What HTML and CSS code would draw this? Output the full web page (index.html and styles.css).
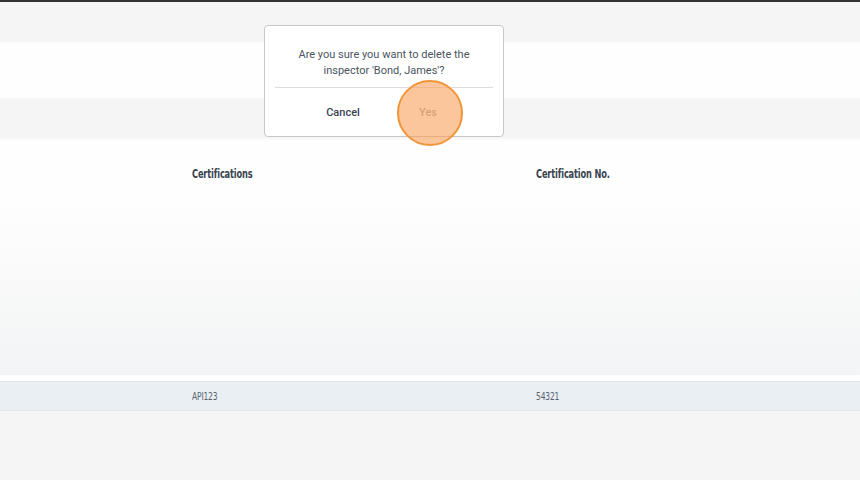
FILE: index.html
```html
<!DOCTYPE html>
<html lang="en">
<head>
<meta charset="UTF-8">
<title>Inspectors</title>
<link rel="stylesheet" href="styles.css">
</head>
<body>

    <div class="topo"></div>
    <div class="faixa-cinza alta"></div>
    <div class="faixa-branca"></div>
    <div class="faixa-cinza"></div>

    <section class="tabela">
        <div class="cabecalho">
            <span class="col col-cert"><span class="estreito">Certifications</span></span>
            <span class="col col-num"><span class="estreito">Certification No.</span></span>
        </div>
        <div class="sombra"></div>
        <div class="linha">
            <span class="col col-cert"><span class="estreito">API123</span></span>
            <span class="col col-num"><span class="estreito">54321</span></span>
        </div>
    </section>

    <div class="dialogo">
        <p class="mensagem">Are you sure you want to delete the<br>inspector 'Bond, James'?</p>
        <div class="botoes">
            <button class="btn-dialogo">Cancel</button>
            <button class="btn-dialogo sim">Yes</button>
        </div>
    </div>

    <div class="clique"></div>

</body>
</html>
```

FILE: styles.css
```css
*{
    margin: 0;
    padding: 0;
    box-sizing: border-box;
}

body{
    background-color: #f5f5f5;
    font-family: "Roboto", "Liberation Sans", sans-serif;
    height: 480px;
    overflow: hidden;
}

.topo{
    height: 2px;
    background: #333333;
}

.faixa-cinza{
    height: 42px;
    background: #f5f5f5;
    border-bottom: 2px solid #fafafa;
}

.faixa-cinza.alta{
    height: 40px;
    border-bottom: none;
}

.faixa-branca{
    height: 56px;
    background: #fefefe;
}

.tabela{
    background: #fefefe;
}

.cabecalho{
    display: flex;
    height: 62px;
    padding-top: 6px;
    align-items: center;
}

.col{
    font-family: "DejaVu Sans Condensed", "Liberation Sans Narrow", sans-serif;
    font-size: 11px;
    color: #3a4350;
}

.estreito{
    display: inline-block;
    transform: scaleX(0.8);
    transform-origin: left center;
}

.col-cert{
    width: 344px;
    margin-left: 192px;
}

.cabecalho .col{
    font-weight: bold;
    font-size: 11.5px;
    letter-spacing: -0.2px;
}

.sombra{
    height: 173px;
    background: linear-gradient(180deg, #fefefe 0%, #fafafa 40%, #f2f4f5 100%);
}

.linha{
    display: flex;
    align-items: center;
    height: 30px;
    margin-top: 6px;
    border-top: 1px solid #e0e7ec;
    border-bottom: 1px solid #e0e7ec;
    background: #e9eff3;
}

.linha .col{
    color: #5a6470;
    font-size: 10.5px;
    letter-spacing: -0.2px;
}

/* caixa de confirmacao */
.dialogo{
    position: absolute;
    top: 25px;
    left: 264px;
    width: 240px;
    height: 112px;
    background: #ffffff;
    border: 1px solid #c8c8c8;
    border-radius: 4px;
    padding: 0 10px;
}

.mensagem{
    font-size: 11px;
    line-height: 16px;
    color: #4a5560;
    text-align: center;
    padding: 21px 0 8px;
    border-bottom: 1px solid #dcdcdc;
}

.botoes{
    display: flex;
    justify-content: center;
    gap: 25px;
    padding-top: 18px;
    padding-left: 3px;
}

.btn-dialogo{
    background: none;
    border: none;
    font-family: "Roboto", "Liberation Sans", sans-serif;
    font-size: 11px;
    font-weight: 500;
    color: #3a4350;
    width: 60px;
}

.btn-dialogo.sim{
    color: #a0a4a8;
}

.clique{
    position: absolute;
    top: 80px;
    left: 397px;
    width: 66px;
    height: 66px;
    border-radius: 50%;
    background: rgba(248, 160, 90, 0.6);
    border: 2px solid #f0953a;
}
```
